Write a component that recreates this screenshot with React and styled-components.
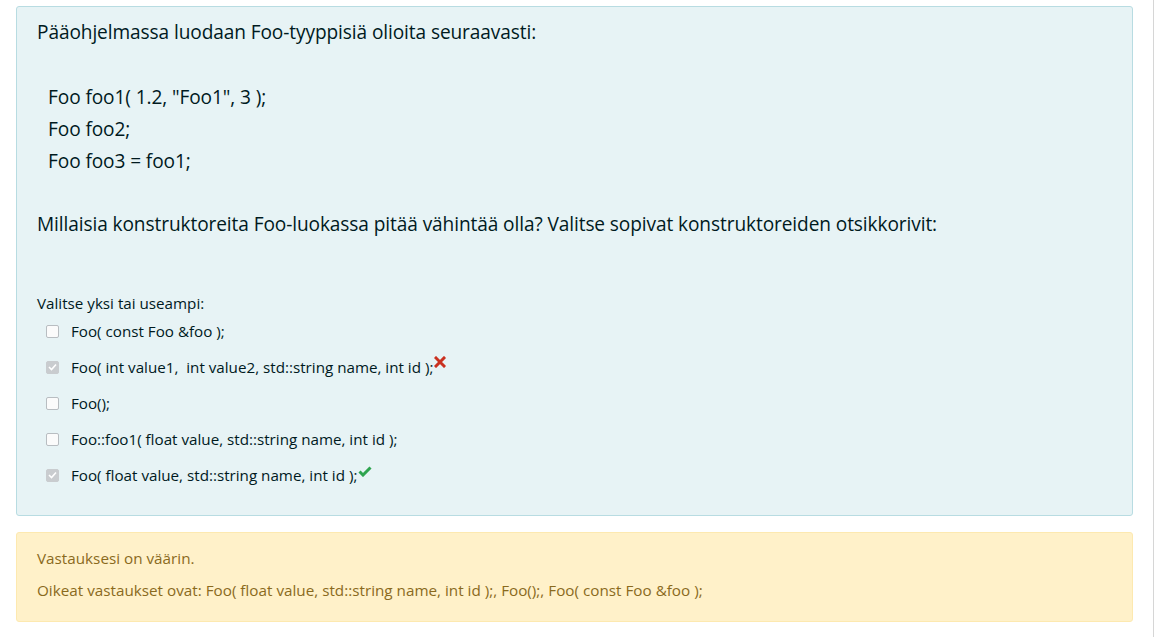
import React from "react";
import styled, { createGlobalStyle } from "styled-components";

const Global = createGlobalStyle`
  html, body { margin: 0; padding: 0; background: #fff; }
  body { font-family: "Open Sans", "Noto Sans", sans-serif; color: #1d2125; }
`;

const Page = styled.div`
  width: 1154px;
  height: 637px;
  border-right: 1px solid #d6d6d6;
  box-sizing: border-box;
  padding: 6px 20px 0 16px;
  display: flex;
  flex-direction: column;
  gap: 16px;
`;

const Formulation = styled.div`
  background: #e7f3f5;
  border: 1px solid #b8dce2;
  border-radius: 3px;
  color: #001a1e;
  padding: 12px 20px 26px 20px;
  height: 510px;
  box-sizing: border-box;
`;

const QText = styled.div`
  font-size: 19.1px;
  letter-spacing: -0.1px;
`;

const Para = styled.p`
  margin: 0;
  line-height: 26px;
  margin-top: ${(p) => p.$before || 0}px;
  margin-bottom: ${(p) => p.$after || 0}px;
`;

const CodeLine = styled.p`
  margin: 0 0 0 11px;
  line-height: 32px;
`;

const Prompt = styled.div`
  font-size: 15.2px;
  margin-top: 55px;
  line-height: 22px;
`;

const Options = styled.div`
  display: flex;
  flex-direction: column;
  padding-left: 9px;
  margin-top: -1px;
`;

const Option = styled.div`
  display: flex;
  align-items: center;
  height: 36px;
  font-size: 15.2px;
`;

const Label = styled.span`
  white-space: pre;
`;

const Box = styled.span`
  width: 13px;
  height: 13px;
  box-sizing: border-box;
  border: 1px solid ${(p) => (p.$checked ? "#c9cccf" : "#b8bdc1")};
  background: ${(p) => (p.$checked ? "#c9cccf" : "#fbfbfb")};
  border-radius: 2px;
  margin-right: 12px;
  display: flex;
  align-items: center;
  justify-content: center;
`;

const Mark = styled.svg`
  align-self: flex-start;
  margin-top: ${(p) => p.$top}px;
  margin-left: 1px;
`;

const Feedback = styled.div`
  background: #fff1c9;
  border: 1px solid #fde9b0;
  border-radius: 3px;
  color: #8a6a1d;
  font-size: 15.25px;
  padding: 13px 20px 20px 20px;
  height: 90px;
  box-sizing: border-box;
`;

const FbLine = styled.p`
  margin: 0;
  line-height: 24px;
  margin-bottom: ${(p) => p.$after || 0}px;
`;

const Cross = () => (
  <Mark $top={7} width="12" height="12" viewBox="0 0 12 12">
    <path d="M2 2 L10 10 M10 2 L2 10" stroke="#ca3120" strokeWidth="3" strokeLinecap="square" />
  </Mark>
);

const Tick = () => (
  <Mark $top={9} width="14" height="11" viewBox="0 0 14 11">
    <path d="M1.5 5.5 L5 9 L12.5 1.5" stroke="#2ea44f" strokeWidth="3" fill="none" />
  </Mark>
);

const CheckGlyph = () => (
  <svg width="9" height="8" viewBox="0 0 9 8">
    <path d="M1 4 L3.5 6.5 L8 1.5" stroke="#fff" strokeWidth="1.6" fill="none" />
  </svg>
);

const answers = [
  { text: "Foo( const Foo &foo );" },
  { text: "Foo( int value1,  int value2, std::string name, int id );", checked: true, mark: "wrong" },
  { text: "Foo();" },
  { text: "Foo::foo1( float value, std::string name, int id );" },
  { text: "Foo( float value, std::string name, int id );", checked: true, mark: "right" },
];

export default function App() {
  return (
    <>
      <Global />
      <Page>
        <Formulation>
          <QText>
            <Para $after={36}>Pääohjelmassa luodaan Foo-tyyppisiä olioita seuraavasti:</Para>
            <CodeLine>Foo foo1( 1.2, "Foo1", 3 );</CodeLine>
            <CodeLine>Foo foo2;</CodeLine>
            <CodeLine>Foo foo3 = foo1;</CodeLine>
            <Para $before={34}>
              Millaisia konstruktoreita Foo-luokassa pitää vähintää olla? Valitse sopivat konstruktoreiden otsikkorivit:
            </Para>
          </QText>
          <Prompt>Valitse yksi tai useampi:</Prompt>
          <Options>
            {answers.map((a) => (
              <Option key={a.text}>
                <Box $checked={a.checked}>{a.checked && <CheckGlyph />}</Box>
                <Label>{a.text}</Label>
                {a.mark === "wrong" && <Cross />}
                {a.mark === "right" && <Tick />}
              </Option>
            ))}
          </Options>
        </Formulation>
        <Feedback>
          <FbLine $after={8}>Vastauksesi on väärin.</FbLine>
          <FbLine>Oikeat vastaukset ovat: Foo( float value, std::string name, int id );, Foo();, Foo( const Foo &amp;foo );</FbLine>
        </Feedback>
      </Page>
    </>
  );
}
